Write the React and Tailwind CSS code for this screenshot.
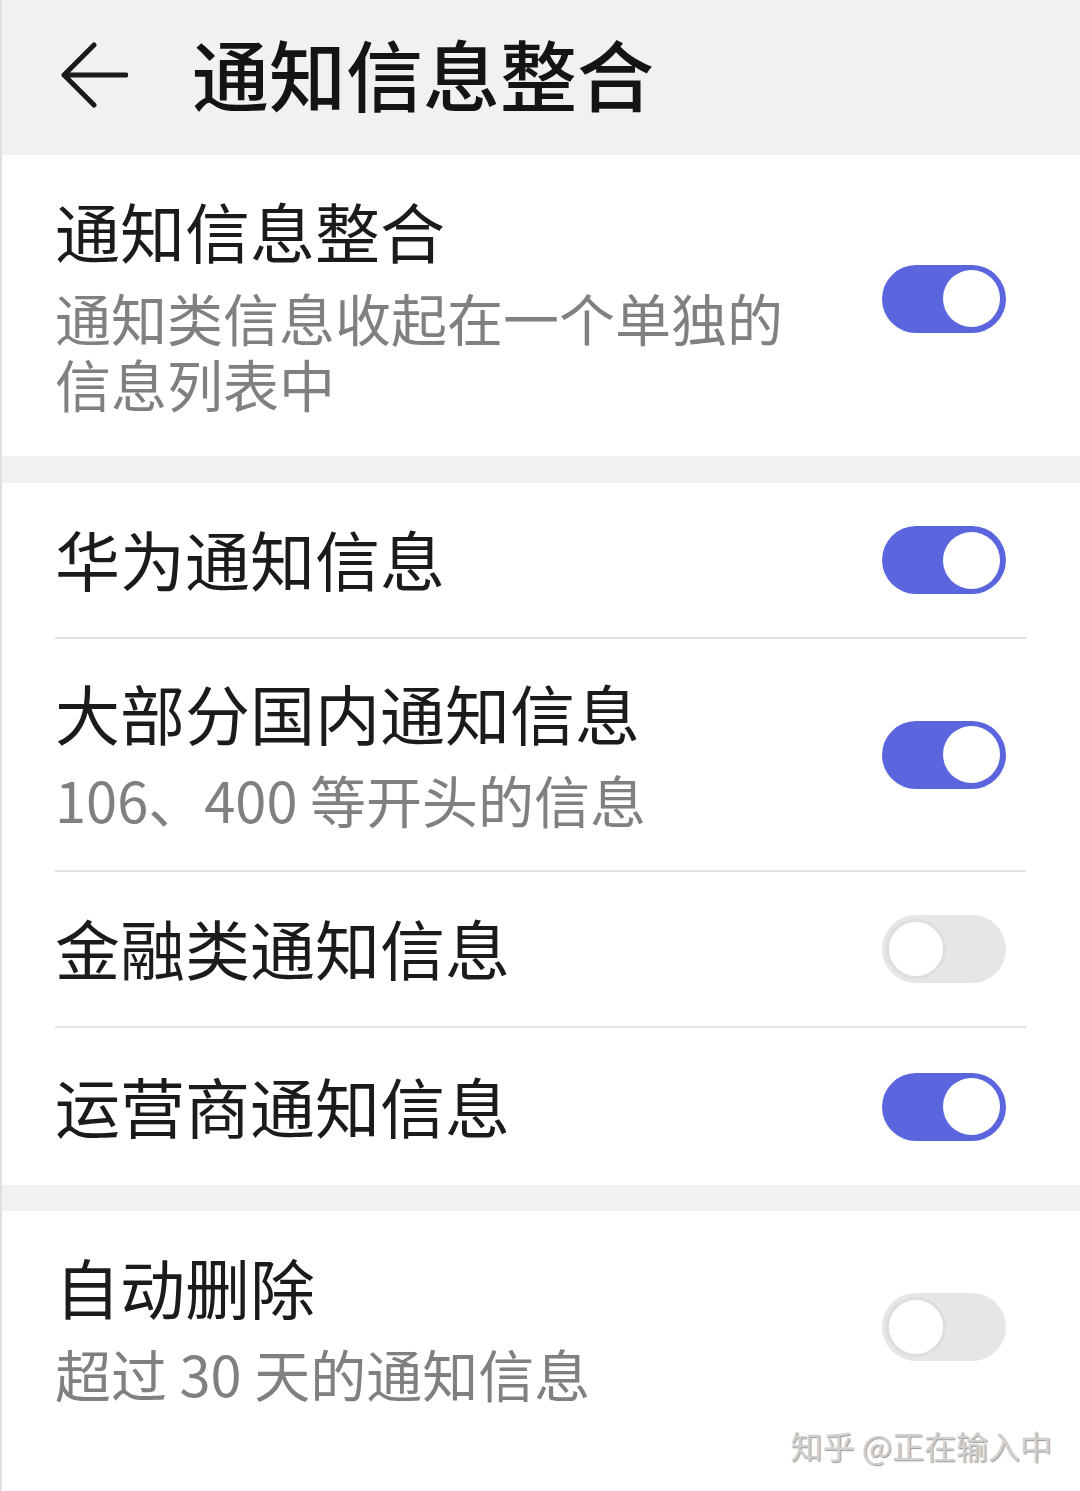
import React from "react";

const font = { fontFamily: '"Noto Sans CJK SC", "Noto Sans", sans-serif' };

const Toggle = ({ on }) =>
  on ? (
    <div className="w-[124px] h-[68px] rounded-full bg-[#5a65de] flex items-center justify-end pr-[6px] shrink-0 mr-[20px]">
      <div className="w-[57px] h-[57px] rounded-full bg-white" />
    </div>
  ) : (
    <div className="w-[124px] h-[68px] rounded-full bg-[#e6e6e6] flex items-center pl-[4px] shrink-0 mr-[20px]">
      <div className="w-[60px] h-[60px] rounded-full bg-white border-[3px] border-[#dedede]" />
    </div>
  );

const Row = ({ title, sub, on, height, last }) => (
  <div
    className={
      "flex items-center justify-between " +
      (last ? "" : "border-b-2 border-[#e3e3e3]")
    }
    style={{ height }}
  >
    <div className="flex flex-col -mt-[4px]">
      <div className="text-[65px] leading-[78px] text-[#1b1b1b]">{title}</div>
      {sub && (
        <div className="text-[56px] leading-[66px] text-[#808080] mt-[15px]">
          {sub}
        </div>
      )}
    </div>
    <Toggle on={on} />
  </div>
);

export default function App() {
  return (
    <div
      className="w-[1080px] h-[1491px] bg-[#f1f1f1] overflow-hidden relative border-l-2 border-[#e0e0e0]"
      style={font}
    >
      {/* header */}
      <div className="h-[155px] flex items-center pl-[58px]">
        <svg width="68" height="66" viewBox="0 0 68 66" fill="none" className="shrink-0 -mt-[6px]">
          <path
            d="M34 3 L4 33 L34 63 M4 33 H66"
            stroke="#1b1b1b"
            strokeWidth="5"
            strokeLinecap="round"
            strokeLinejoin="round"
          />
        </svg>
        <div className="ml-[64px] -mt-[10px] text-[77px] font-medium leading-none text-[#141414]">
          通知信息整合
        </div>
      </div>

      {/* card 1 */}
      <div className="bg-white pl-[53px] pr-[54px] pt-[36px] pb-[40px] flex items-center justify-between">
        <div className="flex flex-col">
          <div className="text-[65px] leading-[78px] text-[#1b1b1b]">通知信息整合</div>
          <div className="text-[56px] leading-[66px] text-[#808080] mt-[15px]">
            <div>通知类信息收起在一个单独的</div>
            <div>信息列表中</div>
          </div>
        </div>
        <div className="-mt-[10px]">
          <Toggle on />
        </div>
      </div>

      {/* card 2 */}
      <div className="bg-white mt-[27px] pl-[53px] pr-[54px]">
        <Row title="华为通知信息" on height={156} />
        <Row title="大部分国内通知信息" sub="106、400 等开头的信息" on height={233} />
        <Row title="金融类通知信息" on={false} height={156} />
        <Row title="运营商通知信息" on height={157} last />
      </div>

      {/* card 3 */}
      <div className="bg-white mt-[26px] pl-[53px] pr-[54px] pt-[36px] h-[300px]">
        <div className="flex items-center justify-between">
          <div className="flex flex-col">
            <div className="text-[65px] leading-[78px] text-[#1b1b1b]">自动删除</div>
            <div className="text-[56px] leading-[66px] text-[#808080] mt-[15px]">
              超过 30 天的通知信息
            </div>
          </div>
          <Toggle on={false} />
        </div>
      </div>

      {/* watermark */}
      <div
        className="absolute right-[28px] bottom-[30px] text-[32px] leading-none text-[#d0d0d0]"
        style={{ textShadow: "1px 1px 1px #9a9a9a" }}
      >
        知乎 @正在输入中
      </div>
    </div>
  );
}
